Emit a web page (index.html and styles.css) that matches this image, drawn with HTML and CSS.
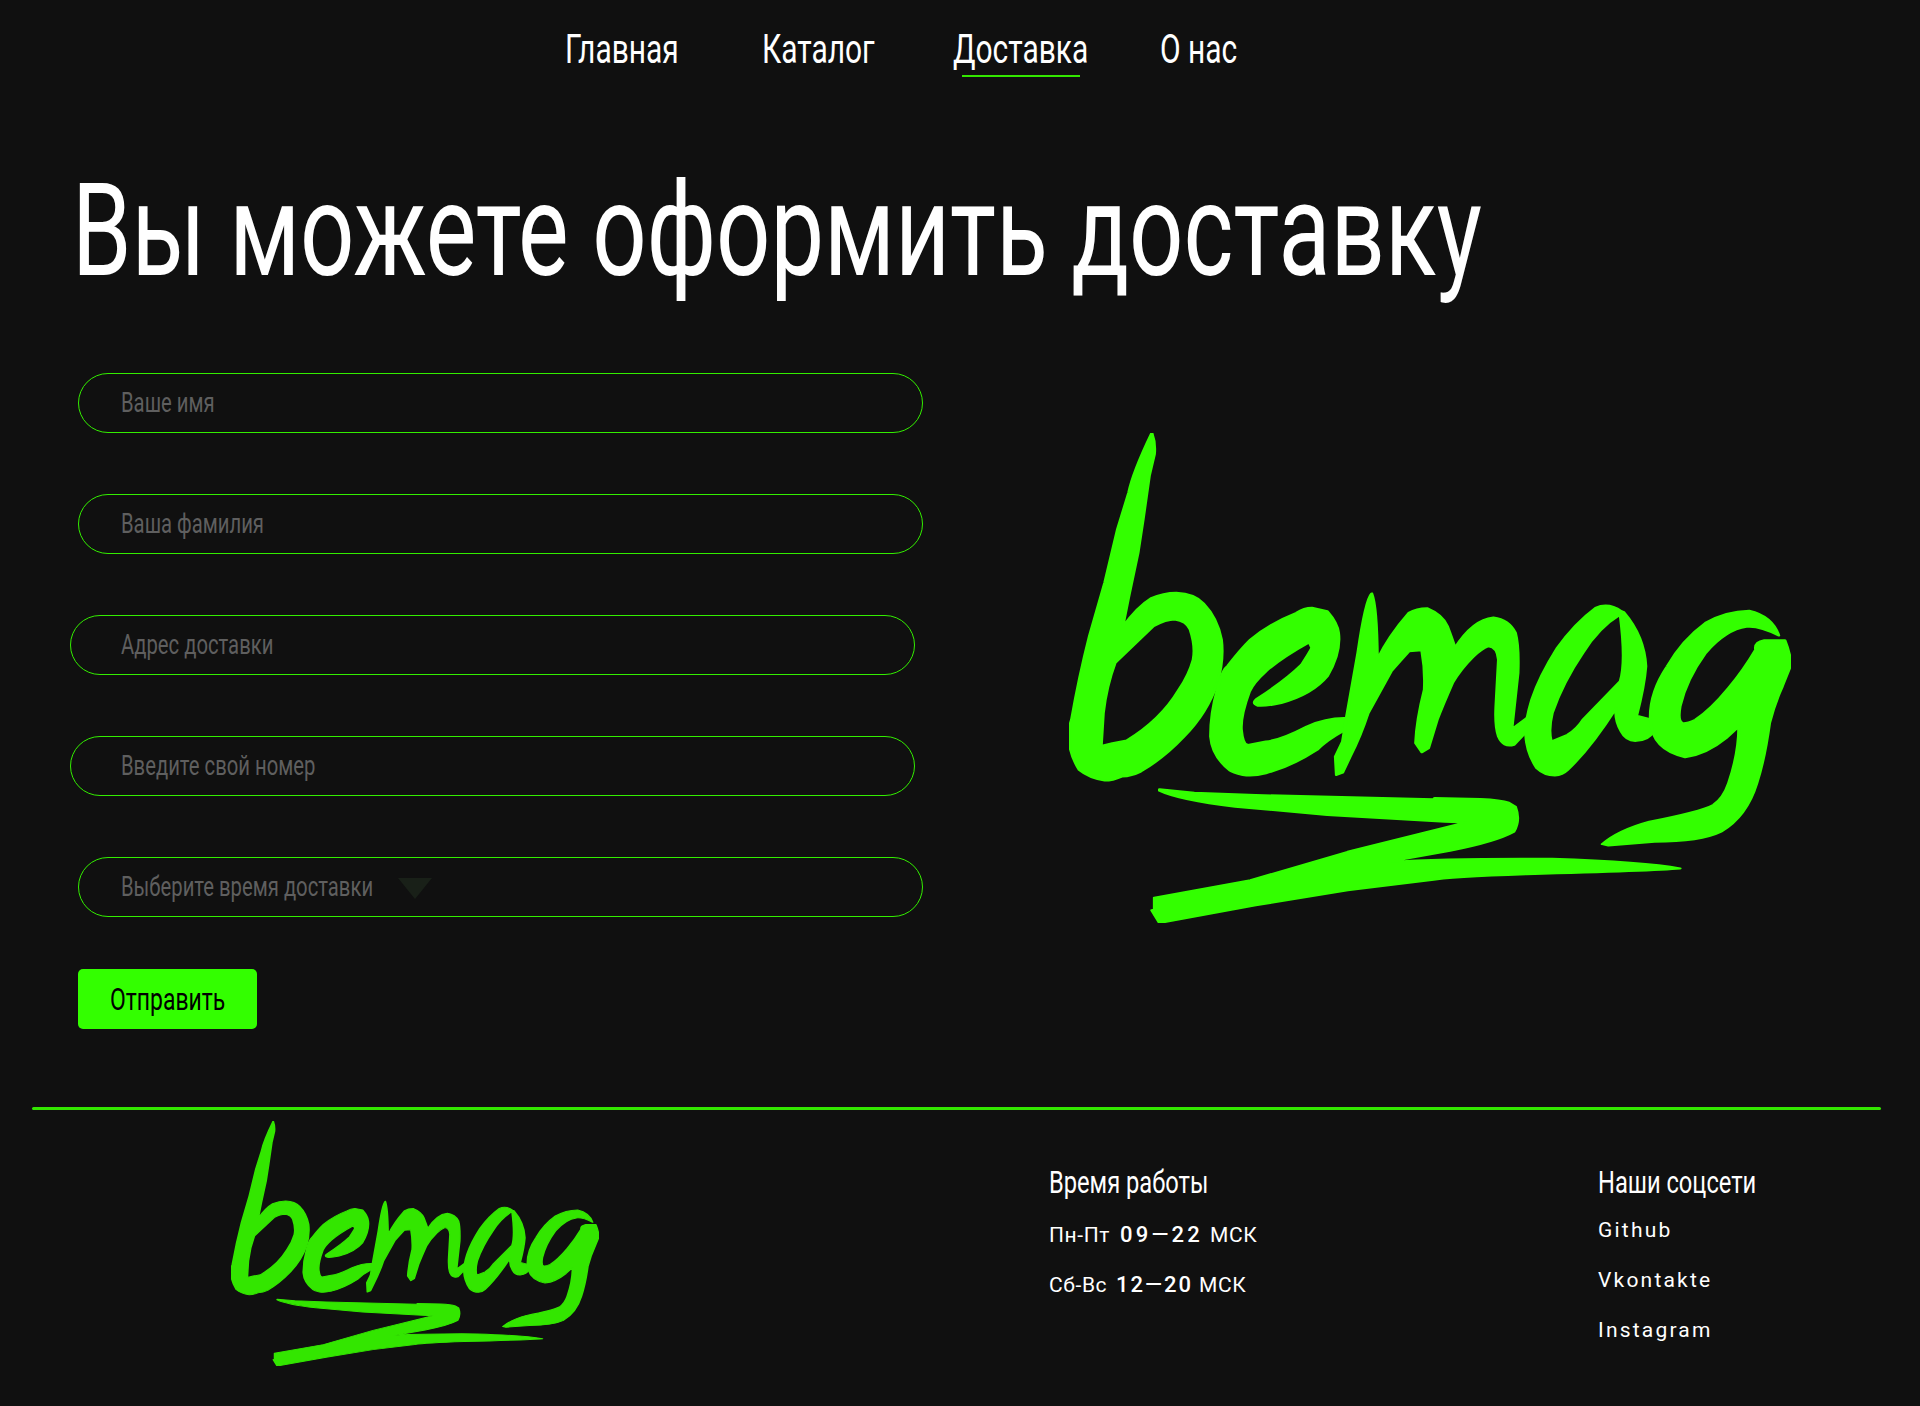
FILE: index.html
```html
<!DOCTYPE html>
<html lang="ru">
<head>
  <meta charset="UTF-8">
  <meta name="viewport" content="width=device-width, initial-scale=1.0">
  <title>bemag - Доставка</title>
  <link rel="stylesheet" href="styles.css">
</head>
<body>

  <!-- logo shape, used in the form block and in the footer -->
  <svg class="sprite" xmlns="http://www.w3.org/2000/svg">
    <symbol id="bemag" viewBox="55 42 1412 1466" preserveAspectRatio="none">
      <path fill-rule="evenodd" d="M217 42 Q224 70 222 105 L212 170 L200 300 L190 400 L172 530 L160 622 Q190 560 215 537 Q240 520 265 520 Q300 522 318 552 Q345 595 353 660 Q358 720 345 790 Q325 880 280 950 Q240 1015 195 1055 Q178 1068 158 1070 Q140 1082 125 1082 Q95 1075 75 1050 Q55 1000 55 950 Q55 920 60 900 Q75 770 95 650 L125 490 L150 330 L172 220 Q180 160 217 42 Z M145 730 L220 620 Q245 600 262 600 Q285 605 292 630 Q303 680 298 720 Q290 765 270 810 Q235 900 168 962 L140 970 L118 978 L122 880 Q128 800 145 730 Z"/>
      <path d="M500 580 Q515 565 530 565 L560 575 Q580 610 582 640 Q587 700 560 770 Q530 825 470 850 Q440 860 425 858 Q410 850 425 835 Q480 780 510 735 Q525 700 530 685 L525 668 Q470 715 440 755 Q415 790 408 815 Q390 890 392 930 Q395 975 405 975 L440 965 Q470 960 520 920 Q560 893 598 895 L590 935 Q560 960 540 990 Q490 1040 440 1060 Q415 1070 395 1065 Q375 1058 370 1052 Q335 1010 332 950 Q332 880 345 810 Q355 750 365 740 Q390 690 410 660 Q450 610 500 580 Z"/>
      <path d="M647 522 Q657 560 658 720 Q680 650 720 580 Q735 566 755 566 Q785 585 795 620 Q805 660 810 685 Q845 600 885 594 Q915 600 928 640 Q935 680 933 760 L921 928 L950 895 L950 935 L925 975 Q905 985 895 950 Q888 920 890 860 L895 720 Q893 682 875 680 Q860 690 845 712 Q820 750 805 790 Q785 860 775 900 L758 985 L745 997 L733 970 Q735 900 750 810 Q752 750 745 692 L720 695 Q705 720 685 755 Q665 810 640 880 Q625 950 605 1010 L590 1058 L578 1065 L576 1010 L590 965 L598 890 L620 700 Q635 540 647 522 Z"/>
      <path fill-rule="evenodd" d="M1135 575 Q1110 548 1085 565 Q1045 610 1010 685 Q975 770 960 840 Q948 900 948 940 Q950 1000 970 1045 Q985 1067 1005 1067 Q1020 1065 1030 1050 Q1075 985 1125 865 Q1122 900 1135 935 Q1145 965 1165 963 Q1190 960 1197 935 L1195 900 L1165 888 Q1180 800 1183 740 Q1180 650 1140 578 Z M1133 585 Q1090 625 1060 700 Q1020 790 1000 880 Q992 930 998 965 L1030 945 Q1050 925 1060 900 L1133 785 Q1145 730 1133 585 Z"/>
      <path d="M1443 648 Q1430 590 1385 574 Q1340 575 1300 610 Q1255 660 1225 740 Q1190 820 1192 900 Q1195 990 1260 1012 Q1300 1005 1340 955 L1365 920 Q1365 1000 1345 1090 Q1335 1135 1315 1155 Q1290 1175 1190 1205 Q1130 1230 1098 1272 L1110 1276 L1200 1265 Q1290 1265 1330 1235 Q1380 1190 1400 1090 Q1415 1020 1425 910 Q1435 850 1450 800 L1467 735 Q1465 700 1455 662 L1415 662 Q1395 668 1398 690 Q1375 750 1345 805 Q1310 870 1280 900 Q1262 912 1255 910 Q1245 905 1250 860 Q1262 780 1300 700 Q1340 630 1380 622 Q1405 618 1443 648 Z"/>
      <path d="M232 1108 L300 1118 L420 1125 L768 1138 L770 1134 L860 1137 Q900 1140 915 1148 L928 1160 Q938 1200 925 1235 Q890 1265 800 1292 L680 1325 Q800 1314 1000 1316 Q1180 1325 1250 1345 Q1200 1352 950 1362 Q800 1370 760 1380 L600 1410 L420 1455 L232 1508 L217 1470 L222 1468 L222 1432 L410 1380 L600 1295 L830 1207 L790 1205 L560 1185 L380 1160 Q270 1140 232 1112 Z"/>
    </symbol>
  </svg>

  <nav class="nav">
    <a class="nav-link" href="#"><span class="narrow">Главная</span></a>
    <a class="nav-link" href="#"><span class="narrow">Каталог</span></a>
    <a class="nav-link active" href="#"><span class="narrow">Доставка</span></a>
    <a class="nav-link" href="#"><span class="narrow">О нас</span></a>
  </nav>

  <main class="delivery">
    <h1 class="title"><span class="narrow">Вы можете оформить доставку</span></h1>

    <div class="delivery-body">
      <form class="order-form">
        <div class="field"><input type="text" placeholder="Ваше имя"></div>
        <div class="field"><input type="text" placeholder="Ваша фамилия"></div>
        <div class="field field-shifted"><input type="text" placeholder="Адрес доставки"></div>
        <div class="field field-shifted"><input type="text" placeholder="Введите свой номер"></div>
        <div class="field">
          <select class="time-select">
            <option>Выберите время доставки</option>
          </select>
          <span class="select-arrow"></span>
        </div>
        <button class="submit" type="submit"><span class="narrow">Отправить</span></button>
      </form>

      <svg class="logo-big"><use href="#bemag"/></svg>
    </div>
  </main>

  <footer class="footer">
    <div class="footer-line"></div>
    <div class="footer-body">
      <svg class="logo-small"><use href="#bemag"/></svg>

      <div class="hours">
        <h4 class="footer-title"><span class="narrow">Время работы</span></h4>
        <p class="hours-row hours-weekdays">
          <span>Пн-Пт</span><span class="tech">09—22</span><span>МСК</span>
        </p>
        <p class="hours-row hours-weekend">
          <span>Сб-Вс</span><span class="tech">12—20</span><span>МСК</span>
        </p>
      </div>

      <div class="socials">
        <h4 class="footer-title"><span class="narrow">Наши соцсети</span></h4>
        <a class="social-link" href="#">Github</a>
        <a class="social-link" href="#">Vkontakte</a>
        <a class="social-link" href="#">Instagram</a>
      </div>
    </div>
  </footer>

</body>
</html>
```

FILE: styles.css
```css
body {
  margin: 0;
  background-color: #101010;
  color: #fff;
  font-family: Roboto, sans-serif;
}
a {
  color: inherit;
  text-decoration: none;
}
.sprite {
  display: none;
}
/* no condensed face is installed, so the text is squeezed */
.narrow {
  display: inline-block;
  white-space: nowrap;
  transform: scaleX(0.74);
  transform-origin: left center;
}

.nav {
  display: grid;
  grid-template-columns: 197px 191px 207px auto;
  height: 98px;
  padding-left: 565px;
  align-items: center;
}
.nav-link {
  position: relative;
  font-size: 41px;
  line-height: 48px;
}
.nav-link .narrow {
  transform: scaleX(0.73);
}
.active::after {
  content: "";
  position: absolute;
  left: 9px;
  bottom: -4px;
  width: 118px;
  height: 2px;
  background-color: #33e600;
}

.delivery {
  padding-left: 75px;
}
.title {
  margin: 58px 0 0 -3px;
  font-size: 129px;
  line-height: 150px;
  font-weight: 400;
}
.delivery-body {
  display: flex;
  align-items: flex-start;
  margin-top: 67px;
}
.order-form {
  display: flex;
  flex-direction: column;
  gap: 61px;
  width: 991px;
  padding-left: 3px;
}
.field {
  display: flex;
  align-items: center;
  width: 845px;
  height: 60px;
  box-sizing: border-box;
  padding-left: 42px;
  border: 1px solid #33ee00;
  border-radius: 30px;
  overflow: hidden;
}
.field-shifted {
  margin-left: -8px;
  padding-left: 50px;
}
.field input {
  width: 1000px;
  flex: none;
  padding: 0;
  border: none;
  outline: none;
  background: transparent;
  color: #fff;
  font: 400 27px Roboto, sans-serif;
  transform: scaleX(0.75);
  transform-origin: left center;
}
.field input::placeholder {
  color: #5f5f5f;
  opacity: 1;
}
.time-select {
  width: 360px;
  flex: none;
  padding: 0;
  border: none;
  outline: none;
  appearance: none;
  background: transparent;
  color: #5f5f5f;
  font: 400 27px Roboto, sans-serif;
  transform: scaleX(0.75);
  transform-origin: left center;
}
.select-arrow {
  width: 0;
  height: 0;
  margin: 3px 0 0 -83px;
  border-left: 17px solid transparent;
  border-right: 17px solid transparent;
  border-top: 21px solid #192018;
}
.submit {
  width: 179px;
  height: 60px;
  margin-top: -9px;
  padding: 0 0 0 32px;
  border: none;
  border-radius: 5px;
  background-color: #33ff00;
  color: #000;
  font: 400 31px Roboto, sans-serif;
  text-align: left;
  cursor: pointer;
}
.logo-big {
  width: 722px;
  height: 490px;
  margin-top: 60px;
  fill: #33ff00;
  stroke: #33ff00;
  stroke-width: 6;
  stroke-linejoin: round;
}

.footer {
  margin-top: 78px;
}
.footer-line {
  height: 3px;
  margin: 0 39px 0 32px;
  border-radius: 2px;
  background-color: #33e600;
}
.footer-body {
  display: grid;
  grid-template-columns: 818px 549px auto;
  padding-left: 231px;
  align-items: start;
}
.logo-small {
  width: 368px;
  height: 245px;
  margin-top: 11px;
  fill: #33e600;
  stroke: #33e600;
  stroke-width: 6;
  stroke-linejoin: round;
}
.hours, .socials {
  padding-top: 55px;
}
.footer-title {
  margin: 0;
  font-size: 32px;
  line-height: 34px;
  font-weight: 400;
}
.hours-row {
  display: grid;
  margin: 0;
  font-size: 21px;
  line-height: 26px;
  letter-spacing: 0.6px;
}
.hours-weekdays {
  grid-template-columns: 71px 90px auto;
  margin-top: 23px;
}
.hours-weekend {
  grid-template-columns: 67px 83px auto;
  margin-top: 24px;
}
.tech {
  font-weight: 500;
  font-size: 22px;
  letter-spacing: 2px;
}
.hours-weekdays .tech {
  letter-spacing: 3.2px;
}
.social-link {
  display: block;
  margin-top: 24px;
  font-size: 21px;
  line-height: 26px;
  letter-spacing: 2.2px;
}
.footer-title + .social-link {
  margin-top: 18px;
}
```
